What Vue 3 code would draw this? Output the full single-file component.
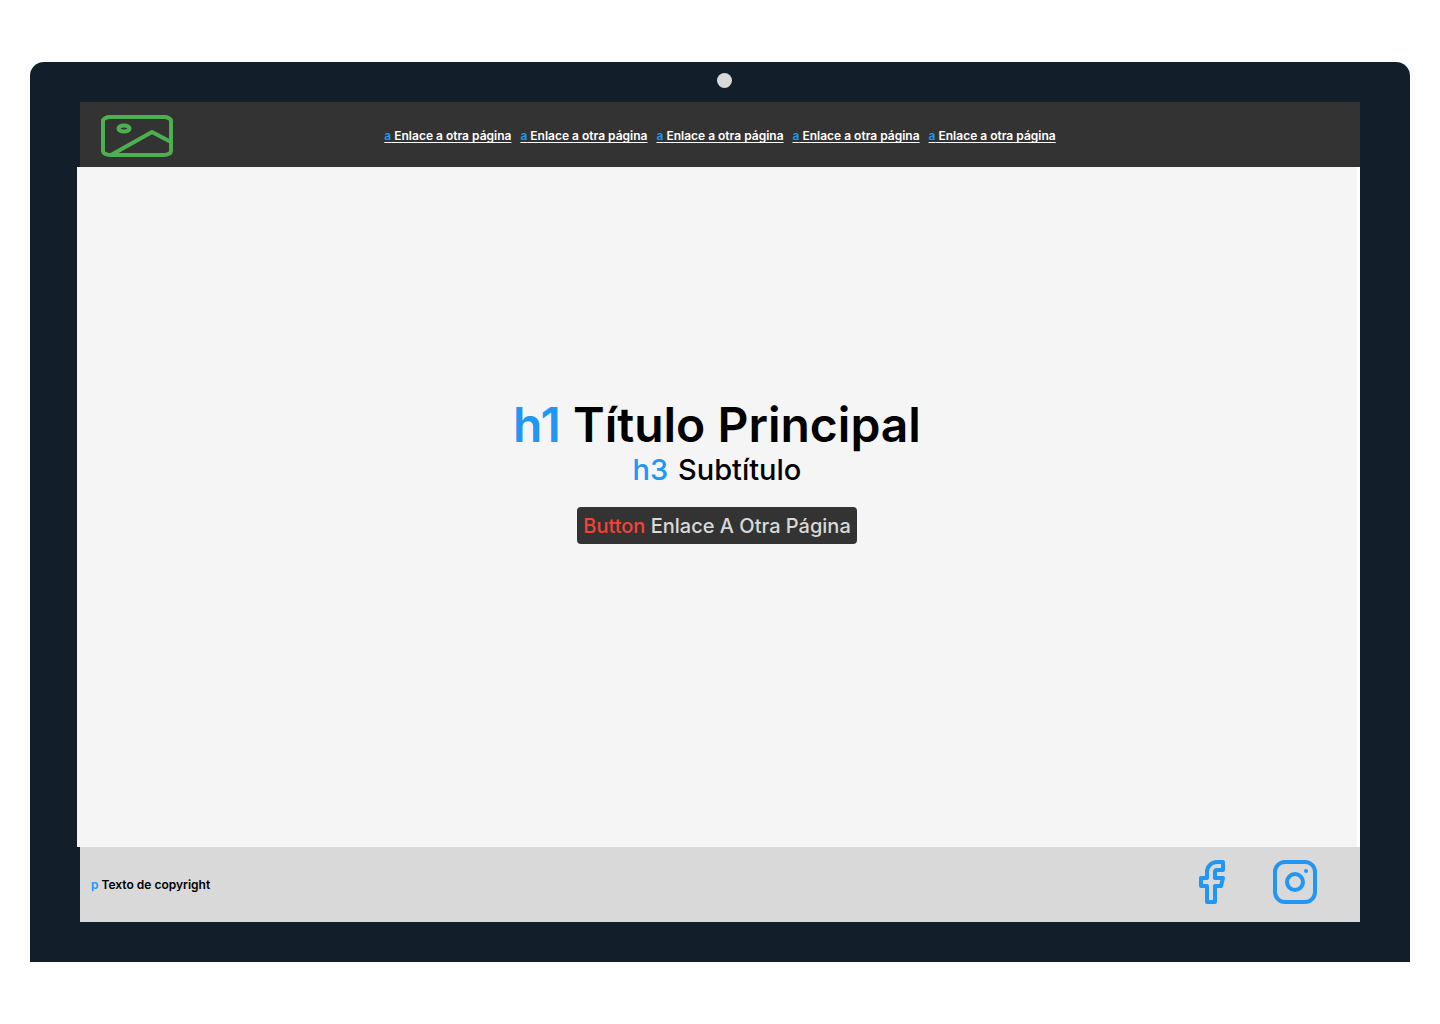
<script setup>
const links = Array.from({ length: 5 }, (_, i) => ({ id: i + 1, text: 'Enlace a otra página' }))
</script>

<template>
  <div class="page">
    <div class="device">
      <div class="bezel"><span class="camera"></span></div>
      <div class="screen">
        <header class="header">
          <svg class="logo" width="72" height="42" viewBox="0 0 72 42" fill="none" stroke="#4caf50" stroke-width="4" stroke-linejoin="round" role="img" aria-label="Logo">
            <rect x="2" y="2" width="68" height="38" rx="7" ry="4" />
            <ellipse cx="23" cy="13.5" rx="5.5" ry="3" />
            <path d="M70 27 51 17 10 40" />
          </svg>
          <nav class="nav">
            <a v-for="link in links" :key="link.id" class="link" href="#"><span class="tag">a</span> {{ link.text }}</a>
          </nav>
        </header>

        <main class="hero">
          <h1 class="title"><span class="tag">h1</span> Título Principal</h1>
          <h3 class="subtitle"><span class="tag">h3</span> Subtítulo</h3>
          <button class="cta" type="button"><span class="cta-tag">Button</span> Enlace A Otra Página</button>
        </main>

        <footer class="footer">
          <p class="copyright"><span class="tag">p</span> Texto de copyright</p>
          <div class="social">
            <a href="#" aria-label="Facebook">
              <svg width="48" height="48" viewBox="0 0 24 24" fill="none" stroke="#2196f3" stroke-width="2" stroke-linecap="round" stroke-linejoin="round">
                <path d="M18 2h-3a5 5 0 0 0-5 5v3H7v4h3v8h4v-8h3l1-4h-4V7a1 1 0 0 1 1-1h3z" />
              </svg>
            </a>
            <a href="#" aria-label="Instagram">
              <svg width="48" height="48" viewBox="0 0 24 24" fill="none" stroke="#2196f3" stroke-width="2" stroke-linecap="round" stroke-linejoin="round">
                <rect x="2" y="2" width="20" height="20" rx="5" />
                <circle cx="12" cy="12" r="4" />
                <path d="M17.5 6.5h.01" />
              </svg>
            </a>
          </div>
        </footer>
      </div>
    </div>
  </div>
</template>

<style>
body {
  margin: 0;
  background: #fff;
}
</style>

<style scoped>
.page {
  box-sizing: border-box;
  min-height: 100vh;
  padding: 62px 30px;
  font-family: Inter, "Liberation Sans", sans-serif;
}

.device {
  padding: 0 50px 40px;
  border-radius: 14px 14px 0 0;
  background: #121e2a;
}

.bezel {
  display: flex;
  align-items: center;
  justify-content: center;
  height: 40px;
  padding: 0 0 4px 9px;
  box-sizing: border-box;
}

.camera {
  width: 15px;
  height: 15px;
  border-radius: 50%;
  background: #d9d9d9;
}

.screen {
  background: #fff;
}

.header {
  display: grid;
  grid-template-columns: 1fr auto 1fr;
  align-items: center;
  min-height: 65px;
  background: #333;
}

.logo {
  margin: 3px 0 0 21px;
}

.nav {
  display: flex;
  gap: 9px;
  padding-top: 3px;
}

.link {
  font-size: 12px;
  line-height: 16px;
  font-weight: 600;
  color: #fff;
  text-decoration: underline;
  text-decoration-thickness: 1px;
  text-decoration-skip-ink: none;
  text-underline-offset: 2px;
  white-space: nowrap;
}

.tag {
  color: #2196f3;
}

.hero {
  box-sizing: border-box;
  display: flex;
  flex-direction: column;
  align-items: center;
  min-height: calc(100vh - 344px);
  margin: 0 3px 0 -3px;
  padding: 226px 20px 40px;
  background: #f5f5f5;
}

.title {
  margin: 0;
  font-size: 48px;
  line-height: 64px;
  font-weight: 600;
  color: #000;
}

.subtitle {
  margin: 0;
  font-size: 29px;
  line-height: 26px;
  font-weight: 500;
  color: #000;
}

.subtitle .tag {
  margin-right: 2px;
}

.cta {
  margin: 24px 0 0;
  padding: 0 6px;
  height: 37px;
  border: 0;
  border-radius: 4px;
  background: #333;
  font-family: inherit;
  font-size: 20px;
  font-weight: 500;
  color: #d9d9d9;
  white-space: nowrap;
}

.cta-tag {
  color: #f44336;
}

.footer {
  display: flex;
  align-items: center;
  justify-content: space-between;
  min-height: 75px;
  padding: 0 41px 0 11px;
  background: #d9d9d9;
}

.copyright {
  margin: 0;
  font-size: 12px;
  line-height: 16px;
  font-weight: 600;
  color: #000;
}

.social {
  display: flex;
  gap: 36px;
  padding-bottom: 5px;
}

.social a,
.social svg {
  display: block;
}
</style>
